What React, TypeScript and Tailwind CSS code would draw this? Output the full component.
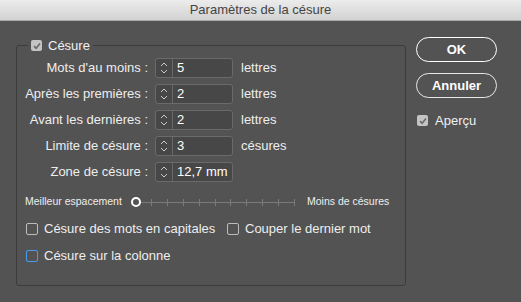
const font = { fontFamily: '"Liberation Sans", Arial, sans-serif' };

type Row = { label: string; value: string; unit?: string };

const rows: Row[] = [
  { label: "Mots d'au moins :", value: "5", unit: "lettres" },
  { label: "Après les premières :", value: "2", unit: "lettres" },
  { label: "Avant les dernières :", value: "2", unit: "lettres" },
  { label: "Limite de césure :", value: "3", unit: "césures" },
  { label: "Zone de césure :", value: "12,7 mm" },
];

const Checked = () => (
  <div className="w-[11px] h-[11px] rounded-[2px] bg-[#c4c4c4] flex items-center justify-center shrink-0">
    <svg width="8" height="8" viewBox="0 0 8 8">
      <path d="M1 4.2 L3.1 6.2 L7 1.4" fill="none" stroke="#6b6b6b" strokeWidth="1.6" />
    </svg>
  </div>
);

const Box = ({ blue }: { blue?: boolean }) => (
  <div
    className={`w-[12px] h-[12px] rounded-[2px] border shrink-0 ${
      blue ? "border-[#4a9bec]" : "border-[#bdbdbd]"
    }`}
  />
);

const Spinner = ({ value }: { value: string }) => (
  <div className="w-[78px] h-[20px] rounded-[3px] border border-[#6a6a6a] bg-[#474747] flex items-stretch">
    <div className="w-[17px] border-r border-[#6a6a6a] flex items-center justify-center">
      <svg width="8" height="14" viewBox="0 0 8 14">
        <path d="M1 5 L4 2 L7 5" fill="none" stroke="#c9c9c9" strokeWidth="1" />
        <path d="M1 9 L4 12 L7 9" fill="none" stroke="#c9c9c9" strokeWidth="1" />
      </svg>
    </div>
    <span className="pl-[4px] text-[13px] leading-[18px] text-white">{value}</span>
  </div>
);

export default function App() {
  return (
    <div className="w-[521px] h-[302px] bg-[#535353] flex flex-col overflow-hidden" style={font}>
      {/* title bar */}
      <div className="h-[21px] shrink-0 bg-gradient-to-b from-[#ececec] to-[#d2d2d2] border-b border-[#a9a9a9] flex items-center justify-center">
        <span className="text-[13px] text-[#444444]">Paramètres de la césure</span>
      </div>

      <div className="flex">
        {/* group box */}
        <div className="relative ml-[16px] mt-[24px] w-[390px] h-[241px] border border-[#3c3c3c] rounded-[3px] pt-[12px]">
          <div className="absolute -top-[8px] left-[11px] bg-[#535353] px-[3px] flex items-center gap-[6px]">
            <Checked />
            <span className="text-[13px] text-[#f0f0f0] leading-[15px]">Césure</span>
          </div>

          <div className="flex flex-col gap-[6px]">
            {rows.map((r) => (
              <div key={r.label} className="flex items-center h-[20px]">
                <span className="w-[131px] text-right text-[13px] text-[#eeeeee] whitespace-nowrap">{r.label}</span>
                <div className="ml-[7px]">
                  <Spinner value={r.value} />
                </div>
                {r.unit && <span className="ml-[8px] text-[13px] text-[#eeeeee]">{r.unit}</span>}
              </div>
            ))}
          </div>

          {/* slider */}
          <div className="mt-[15px] pl-[8px] flex items-center h-[10px]">
            <span className="text-[10.5px] text-[#eeeeee] w-[106px] whitespace-nowrap">Meilleur espacement</span>
            <div className="w-[10px] h-[10px] rounded-full border-2 border-white shrink-0" />
            <div className="relative w-[154px] h-[7px] flex items-center">
              <div className="w-full h-[1px] bg-[#7a7a7a]" />
              <div className="absolute inset-0 flex justify-between pl-[10px]">
                {Array.from({ length: 10 }).map((_, i) => (
                  <div key={i} className="w-[1px] h-[7px] bg-[#7a7a7a]" />
                ))}
              </div>
            </div>
            <span className="ml-[12px] text-[10.5px] text-[#eeeeee] whitespace-nowrap">Moins de césures</span>
          </div>

          {/* checkboxes */}
          <div className="mt-[16px] pl-[9px] flex items-center h-[12px]">
            <div className="flex items-center gap-[6px] w-[201px]">
              <Box />
              <span className="text-[13px] text-[#eeeeee]">Césure des mots en capitales</span>
            </div>
            <div className="flex items-center gap-[6px]">
              <Box />
              <span className="text-[13px] text-[#eeeeee]">Couper le dernier mot</span>
            </div>
          </div>
          <div className="mt-[15px] pl-[9px] flex items-center gap-[6px] h-[12px]">
            <Box blue />
            <span className="text-[13px] text-[#eeeeee]">Césure sur la colonne</span>
          </div>
        </div>

        {/* right column */}
        <div className="ml-[10px] mt-[16px] flex flex-col">
          <button className="w-[81px] h-[25px] rounded-full border-[1.5px] border-white text-[13px] font-bold text-white">
            OK
          </button>
          <button className="mt-[11px] w-[81px] h-[25px] rounded-full border border-[#e8e8e8] text-[13px] font-bold text-white">
            Annuler
          </button>
          <div className="mt-[17px] ml-[1px] h-[11px] flex items-center gap-[7px]">
            <Checked />
            <span className="text-[13px] text-[#f0f0f0]">Aperçu</span>
          </div>
        </div>
      </div>
    </div>
  );
}
